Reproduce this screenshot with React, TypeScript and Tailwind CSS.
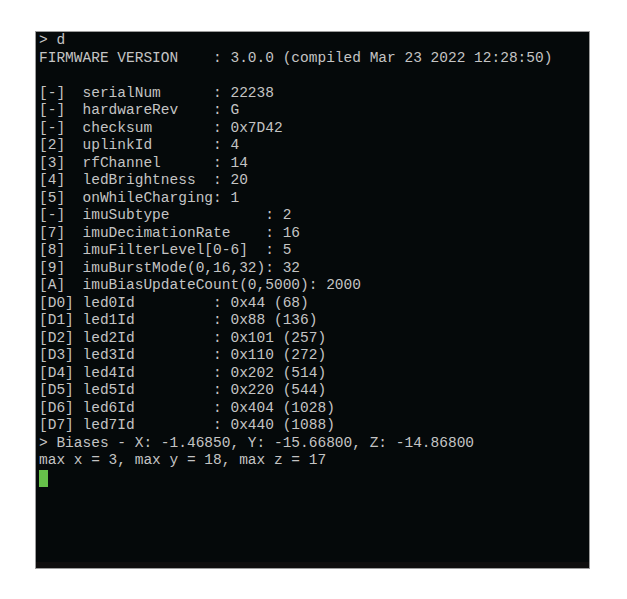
const LINES = [
  '> d',
  'FIRMWARE VERSION    : 3.0.0 (compiled Mar 23 2022 12:28:50)',
  '',
  '[-]  serialNum      : 22238',
  '[-]  hardwareRev    : G',
  '[-]  checksum       : 0x7D42',
  '[2]  uplinkId       : 4',
  '[3]  rfChannel      : 14',
  '[4]  ledBrightness  : 20',
  '[5]  onWhileCharging: 1',
  '[-]  imuSubtype           : 2',
  '[7]  imuDecimationRate    : 16',
  '[8]  imuFilterLevel[0-6]  : 5',
  '[9]  imuBurstMode(0,16,32): 32',
  '[A]  imuBiasUpdateCount(0,5000): 2000',
  '[D0] led0Id         : 0x44 (68)',
  '[D1] led1Id         : 0x88 (136)',
  '[D2] led2Id         : 0x101 (257)',
  '[D3] led3Id         : 0x110 (272)',
  '[D4] led4Id         : 0x202 (514)',
  '[D5] led5Id         : 0x220 (544)',
  '[D6] led6Id         : 0x404 (1028)',
  '[D7] led7Id         : 0x440 (1088)',
  '> Biases - X: -1.46850, Y: -15.66800, Z: -14.86800',
  'max x = 3, max y = 18, max z = 17',
];

export default function App() {
  return (
    <div className="min-h-[599px] w-[627px] bg-white pt-[31px] pl-[35px]">
      <div className="flex h-[538px] w-[555px] flex-col border border-[#9c9c9c] bg-[#05090a]">
        <div
          className="flex-1 pl-[3px] text-[14.5px] leading-[17.5px] text-[#c4c4c4] whitespace-pre"
          style={{ fontFamily: '"Liberation Mono", "Courier New", monospace' }}
        >
          {LINES.map((line, i) => (
            <div key={i} className="h-[17.5px]">
              {line}
            </div>
          ))}
          <div className="flex h-[17.5px] items-center">
            <span className="h-[17px] w-[9px] bg-[#66c14a]" />
          </div>
        </div>
        <div className="h-[6px] bg-[#0f0e0e]" />
      </div>
    </div>
  );
}
